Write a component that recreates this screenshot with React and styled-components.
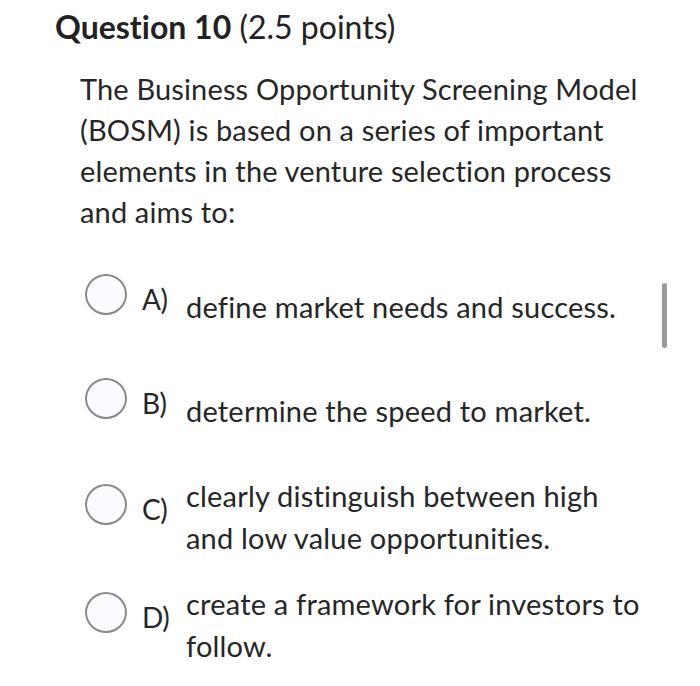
import React from 'react'
import styled, { createGlobalStyle } from 'styled-components'

const GlobalStyle = createGlobalStyle`
  html, body {
    margin: 0;
    padding: 0;
    background: #fff;
  }
  body {
    font-family: Lato, "Noto Sans", sans-serif;
    color: #262626;
    font-variant-ligatures: none;
  }
`;

const options = [
  { letter: 'A)', text: 'define market needs and success.' },
  { letter: 'B)', text: 'determine the speed to market.' },
  { letter: 'C)', text: 'clearly distinguish between high and low value opportunities.' },
  { letter: 'D)', text: 'create a framework for investors to follow.' },
];

export default function App() {
  return (
    <>
      <GlobalStyle />
      <Page>
        <Title>
          <strong>Question 10</strong> (2.5 points)
        </Title>
        <Body>
          <Prompt>
            The Business Opportunity Screening Model (BOSM) is based on a series of important
            elements in the venture selection process and aims to:
          </Prompt>
          <Options>
            {options.map((o) => (
              <Option key={o.letter}>
                <Radio />
                <Letter>{o.letter}</Letter>
                <OptionText>{o.text}</OptionText>
              </Option>
            ))}
          </Options>
        </Body>
        <Scrollbar />
      </Page>
    </>
  )
}

const Page = styled.div`
  position: relative;
  width: 700px;
  height: 686px;
  padding: 7px 0 0 55px;
  box-sizing: border-box;
  overflow: hidden;
`;

const Title = styled.h2`
  margin: 0;
  font-size: 32px;
  line-height: 40px;
  font-weight: 400;
  color: #222;
  strong {
    font-weight: 700;
  }
`;

const Body = styled.div`
  padding: 21px 0 0 25px;
`;

const Prompt = styled.p`
  margin: 0;
  width: 575px;
  font-size: 29px;
  line-height: 41px;
  letter-spacing: 0.15px;
`;

const Options = styled.div`
  display: flex;
  flex-direction: column;
  gap: 24px;
  margin-top: 35px;
`;

const Option = styled.div`
  display: flex;
  align-items: center;
  min-height: 80px;
`;

const Radio = styled.span`
  flex: none;
  width: 42px;
  height: 41px;
  box-sizing: border-box;
  border: 2px solid #8a8a8a;
  border-radius: 50%;
  background: #fbfbff;
  margin: 0 15px 26px 5px;
`;

const Letter = styled.span`
  flex: none;
  width: 44px;
  font-size: 28px;
  line-height: 30px;
  margin-bottom: 16px;
  letter-spacing: -0.5px;
`;

const OptionText = styled.span`
  width: 460px;
  font-size: 29px;
  line-height: 42px;
  letter-spacing: 0.2px;
`;

const Scrollbar = styled.div`
  position: absolute;
  left: 662px;
  top: 283px;
  width: 5px;
  height: 65px;
  border-radius: 3px;
  background: #9a9a9a;
`;
